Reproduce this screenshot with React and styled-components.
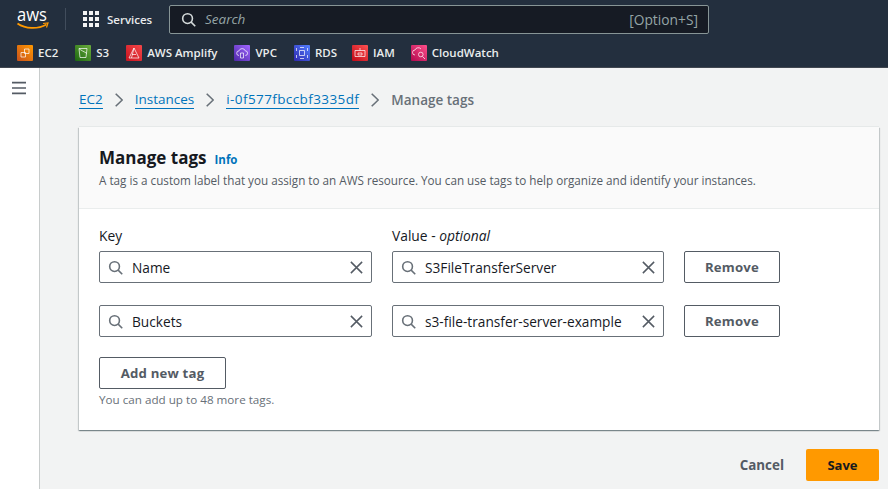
import React from "react";
import styled, { createGlobalStyle } from "styled-components";

const Global = createGlobalStyle`
  html, body { margin: 0; padding: 0; height: 100%; background: #f2f3f3; }
  body { font-family: "Open Sans", "Noto Sans", "Liberation Sans", sans-serif; overflow: hidden; }
  * { box-sizing: border-box; }
`;

const Page = styled.div`width: 888px; height: 489px; display: flex; flex-direction: column; overflow: hidden;`;
const TopNav = styled.header`height: 68px; background: #232f3e; display: flex; flex-direction: column; flex: none; border-bottom: 1px solid #414750;`;
const NavRow = styled.div`height: 38px; flex: none; display: flex; align-items: center; padding-left: 17px;`;
const Logo = styled.svg`width: 32px; height: 22px; flex: none; overflow: visible;`;
const Divider = styled.div`width: 1px; height: 22px; background: #414d5c; margin: 0 17px 0 16px;`;
const Services = styled.div`display: flex; align-items: center; gap: 8px; color: #e9ebed; font-size: 11.5px; font-weight: 600; width: 86px;`;
const Grid = styled.svg`width: 16px; height: 16px; flex: none;`;
const Search = styled.div`width: 540px; height: 29px; background: #161b24; border: 1px solid #879596; border-radius: 2px; display: flex; align-items: center; padding: 0 10px 0 11px; gap: 9px;`;
const SearchWord = styled.span`flex: 1; color: #95a5a6; font-style: italic; font-size: 13.5px;`;
const Hint = styled.span`color: #95a5a6; font-size: 13.8px;`;
const Shortcuts = styled.div`flex: 1; display: flex; align-items: center; padding-left: 17px;`;
const Shortcut = styled.div`display: flex; align-items: center; gap: 5px; color: #eaeded; font-size: 11.5px; font-weight: 600; margin-right: ${p => p.$gap}px;`;
const Tile = styled.span`width: 16px; height: 16px; flex: none; display: block; background: linear-gradient(45deg, ${p => p.$from}, ${p => p.$to}); border-radius: 1px;`;
const TileSvg = styled.svg`width: 16px; height: 16px; display: block;`;

const Body = styled.div`flex: 1; display: flex; min-height: 0;`;
const Side = styled.aside`width: 40px; flex: none; background: #fff; border-right: 1px solid #c8cccc; padding: 13px 0 0 12px;`;
const Burger = styled.svg`width: 14px; height: 14px; display: block;`;
const Main = styled.main`flex: 1; padding: 19px 9px 0 39px; min-width: 0;`;
const Crumbs = styled.nav`height: 26px; display: flex; align-items: center; font-size: 13.5px;`;
const Crumb = styled.a`color: #0073bb; border-bottom: 1px solid #0073bb; line-height: 17px; letter-spacing: ${p => p.$ls || 0}px;`;
const Current = styled.span`color: #687078; font-weight: 600; font-size: 13.5px;`;
const Chevron = styled.svg`width: 8px; height: 14px; margin: 0 12px; flex: none;`;
const Card = styled.section`width: 800px; height: 303px; margin-top: 14px; background: #fff; box-shadow: 0 -1px 0 0 #e6e9e9, 0 1px 1px 0 rgba(0,28,36,.3), 1px 1px 1px 0 rgba(0,28,36,.15), -1px 1px 1px 0 rgba(0,28,36,.15);`;
const CardHead = styled.div`height: 82px; background: #fafafa; border-bottom: 1px solid #eaeded; padding: 20px 20px 0;`;
const TitleRow = styled.div`display: flex; align-items: baseline; gap: 8px;`;
const Title = styled.h2`margin: 0; font-size: 17px; line-height: 22px; font-weight: 700; color: #16191f;`;
const Info = styled.a`font-size: 11.5px; font-weight: 700; color: #0073bb;`;
const Desc = styled.p`margin: 3px 0 0; font-size: 11.7px; line-height: 16px; color: #545b64;`;
const CardBody = styled.div`padding: 17px 20px 0;`;
const Labels = styled.div`display: flex; gap: 20px; height: 25px; font-size: 13.8px; color: #16191f; line-height: 20px;`;
const LabelCell = styled.span`width: ${p => p.$w}px;`;
const Row = styled.div`display: flex; align-items: center; gap: 20px; margin-bottom: 22px;`;
const Field = styled.div`width: ${p => p.$w}px; height: 32px; background: #fff; border: 1px solid #687078; border-radius: 2px; display: flex; align-items: center; padding: 0 7px 0 8px; font-size: 13.7px; color: #16191f;`;
const FieldText = styled.span`flex: 1; margin-left: 9px; white-space: nowrap; overflow: hidden;`;
const Ico = styled.svg`width: 15px; height: 15px; flex: none;`;
const Btn = styled.button`font-family: inherit; height: 32px; width: ${p => p.$w}px; background: #fff; border: 1px solid #545b64; border-radius: 2px; color: #545b64; font-weight: 700; font-size: 13.2px; padding: 0; letter-spacing: .2px;`;
const AddBtn = styled(Btn)`margin-top: -2px; display: block;`;
const Hintline = styled.p`margin: 3px 0 0; font-size: 11.67px; line-height: 16px; color: #687078;`;
const Footer = styled.div`width: 800px; display: flex; justify-content: flex-end; align-items: center; gap: 22px; margin-top: 19px;`;
const Cancel = styled.span`color: #545b64; font-weight: 700; font-size: 13.4px;`;
const Save = styled.button`font-family: inherit; width: 73px; height: 32px; background: #ff9900; border: 0; border-radius: 2px; color: #16191f; font-weight: 700; font-size: 13px; padding: 0;`;

const SearchIcon = ({ c = "#687078" }) => (
  <Ico viewBox="0 0 16 16" fill="none" stroke={c} strokeWidth="1.7">
    <circle cx="7" cy="7" r="5.2" />
    <path d="M10.8 10.8L15.200 15.200" />
  </Ico>
);
const XIcon = () => (
  <Ico viewBox="0 0 16 16" fill="none" stroke="#545b64" strokeWidth="1.6">
    <path d="M2 2l12 12M14 2L2 14" />
  </Ico>
);
const Chev = () => (
  <Chevron viewBox="0 0 8 14" fill="none" stroke="#687078" strokeWidth="1.6">
    <path d="M.7 .7L7.200 7 .7 13.300" />
  </Chevron>
);

const stroke = { fill: "none", stroke: "#fff", strokeWidth: 1, opacity: 0.7 };
const glyphs = {
  ec2: <path d="M7.500 4h4.500v4.500H7.500zM4 7.500h4.500V12H4z" {...stroke} />,
  s3: <path d="M4 3.500h8l-1 9H5zM4 3.500c2 2 5 3 8 5" {...stroke} />,
  amp: <path d="M8 3l5 10H3zM6 9.500h4M8 3L5.500 13" {...stroke} />,
  vpc: <path d="M5 10.500a2.300 2.300 0 010-4.600 3.300 3.300 0 016.300 0 2.300 2.300 0 010 4.600M6.500 8h3v5h-3z" {...stroke} />,
  rds: <path d="M5.500 5.500h5v5h-5zM2.500 3v3M13.500 3v3M2.500 10v3M13.500 10v3M6 2.500h4M6 13.500h4" {...stroke} />,
  iam: <path d="M3 5.500h10v6H3zM6 8h4v2H6zM8 3v2.500" {...stroke} />,
  cw: <path d="M4 10a2.500 2.500 0 010-5 3.500 3.500 0 016-1M7.500 9.500a2.300 2.300 0 104.600 0 2.300 2.300 0 00-4.600 0M11.500 11.500l2.500 2.500" {...stroke} />,
};

const items = [
  ["EC2", "#c8511b", "#ff9900", "ec2", 17],
  ["S3", "#1b660f", "#6cae3e", "s3", 17],
  ["AWS Amplify", "#c7131f", "#f54749", "amp", 17],
  ["VPC", "#4d27a8", "#a166ff", "vpc", 17],
  ["RDS", "#2e27ad", "#527fff", "rds", 15],
  ["IAM", "#bd0816", "#ff5252", "iam", 16],
  ["CloudWatch", "#b0084d", "#ff4f8b", "cw", 0],
];

const TagRow = ({ k, v }) => (
  <Row>
    <Field $w={273}><SearchIcon /><FieldText>{k}</FieldText><XIcon /></Field>
    <Field $w={272}><SearchIcon /><FieldText>{v}</FieldText><XIcon /></Field>
    <Btn $w={96}>Remove</Btn>
  </Row>
);

export default function App() {
  return (
    <Page>
      <Global />
      <TopNav>
        <NavRow>
          <Logo viewBox="0 0 32 22" fill="none">
            <text x="0" y="12.500" fontFamily="'Open Sans', sans-serif" fontSize="18" fill="#fff" textLength="30" lengthAdjust="spacingAndGlyphs">aws</text>
            <path d="M.5 15.500c8 5.500 20 6 29 1" stroke="#ff9900" strokeWidth="1.800" />
            <path d="M26 15.500l5-.5-1.500 4.500" stroke="#ff9900" strokeWidth="1.200" />
          </Logo>
          <Divider />
          <Services>
            <Grid viewBox="0 0 16 16" fill="#f2f3f3">
              {[0, 6, 12].flatMap(x => [0, 6, 12].map(y => <rect key={`${x}-${y}`} x={x} y={y} width="4" height="4" />))}
            </Grid>
            Services
          </Services>
          <Search>
            <SearchIcon c="#d5dbdb" />
            <SearchWord>Search</SearchWord>
            <Hint>[Option+S]</Hint>
          </Search>
        </NavRow>
        <Shortcuts>
          {items.map(([n, from, to, g, gap]) => (
            <Shortcut key={n} $gap={gap}>
              <Tile $from={from} $to={to}><TileSvg viewBox="0 0 16 16">{glyphs[g]}</TileSvg></Tile>
              {n}
            </Shortcut>
          ))}
        </Shortcuts>
      </TopNav>
      <Body>
        <Side>
          <Burger viewBox="0 0 14 14" fill="none" stroke="#545b64" strokeWidth="1.700">
            <path d="M0 1.700h14M0 7h14M0 12.300h14" />
          </Burger>
        </Side>
        <Main>
          <Crumbs>
            <Crumb>EC2</Crumb><Chev />
            <Crumb>Instances</Crumb><Chev />
            <Crumb $ls={0.4}>i-0f577fbccbf3335df</Crumb><Chev />
            <Current>Manage tags</Current>
          </Crumbs>
          <Card>
            <CardHead>
              <TitleRow><Title>Manage tags</Title><Info>Info</Info></TitleRow>
              <Desc>A tag is a custom label that you assign to an AWS resource. You can use tags to help organize and identify your instances.</Desc>
            </CardHead>
            <CardBody>
              <Labels><LabelCell $w={273}>Key</LabelCell><LabelCell $w={272}>Value - <i>optional</i></LabelCell></Labels>
              <TagRow k="Name" v="S3FileTransferServer" />
              <TagRow k="Buckets" v="s3-file-transfer-server-example" />
              <AddBtn $w={127}>Add new tag</AddBtn>
              <Hintline>You can add up to 48 more tags.</Hintline>
            </CardBody>
          </Card>
          <Footer>
            <Cancel>Cancel</Cancel>
            <Save>Save</Save>
          </Footer>
        </Main>
      </Body>
    </Page>
  );
}
